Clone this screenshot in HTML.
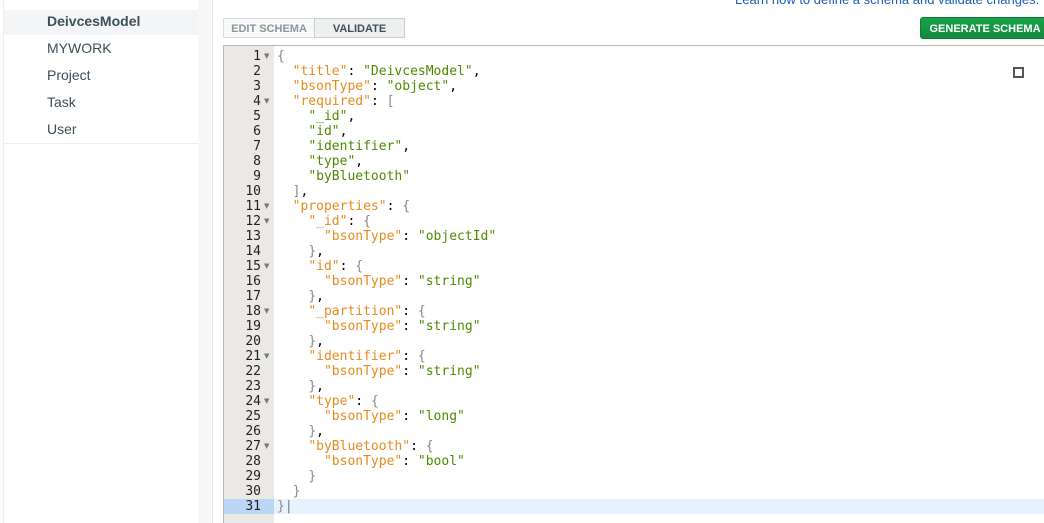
<!DOCTYPE html><html><head><style>
html,body{margin:0;width:1044px;height:523px;overflow:hidden}
body{background:#fff;font-family:"Liberation Sans",sans-serif;position:relative}
.sb{position:absolute;left:3px;top:0;width:194px;height:523px;border-right:1px solid #e4e4e4;border-left:1px solid #eee;background:#fff}
.sb div{position:absolute;left:43px;font-size:14px;color:#3d4f58}
.strip{position:absolute;left:198px;top:0;width:14px;height:523px;background:#f7f7f7;border-right:1px solid #e4e4e4}
.btn{position:absolute;top:18px;height:20px;font-size:11px;font-weight:bold;line-height:20px;text-align:center;box-sizing:border-box}
.ed{position:absolute;left:223px;top:45px;width:830px;height:477px;border:1px solid #b8b8b8;border-bottom:none;background:#fff;overflow:hidden}
.gut{position:absolute;left:0;top:0;width:50px;height:100%;background:#ebe9e6}
pre{margin:0;font-family:"DejaVu Sans Mono",monospace;font-size:13px;line-height:15px;position:absolute;top:3px}
.k{color:#e68a1d}.s{color:#4d8a00}.p{color:#888}
.a{position:absolute;left:40px;color:#777;font-size:7px;font-family:"DejaVu Sans",sans-serif}
</style></head><body>
<div class="sb">
<div style="top:-13px;color:#999">CIDO</div>
<div style="left:0;top:10px;width:194px;height:25px;background:#f4f5f6"></div>
<div style="top:13px;font-weight:bold;color:#3d4f58">DeivcesModel</div>
<div style="top:40px">MYWORK</div>
<div style="top:67px">Project</div>
<div style="top:94px">Task</div>
<div style="top:121px">User</div>
<div style="left:0;top:143px;width:194px;border-top:1px solid #eee"></div>
</div>
<div class="strip"></div>
<div class="btn" style="left:223px;width:92px;border:1px solid #ddd;background:#f7f8f8;color:#8a979c">EDIT SCHEMA</div>
<div class="btn" style="left:314px;width:91px;border:1px solid #ccc;background:#eef0f0;color:#3d4f58">VALIDATE</div>
<div style="position:absolute;left:735px;top:-8px;font-size:13px;color:#1a5fb4;white-space:nowrap">Learn how to define a schema and validate changes.</div>
<div class="btn" style="left:920px;top:17px;width:130px;height:22px;line-height:22px;background:linear-gradient(#1aa34a,#138a3c);color:#fff;border-radius:3px;border:1px solid #0f7a35">GENERATE SCHEMA</div>
<div class="ed">
<div class="gut"></div>
<div style="position:absolute;left:0;top:453px;width:830px;height:15px;background:#e8f2fe"></div>
<div style="position:absolute;left:0;top:453px;width:50px;height:15px;background:#bcd6f5"></div>
<pre style="left:0;width:37px;text-align:right;color:#222">1
2
3
4
5
6
7
8
9
10
11
12
13
14
15
16
17
18
19
20
21
22
23
24
25
26
27
28
29
30
31</pre>
<div class="a" style="top:6px">▼</div>
<div class="a" style="top:51px">▼</div>
<div class="a" style="top:156px">▼</div>
<div class="a" style="top:171px">▼</div>
<div class="a" style="top:216px">▼</div>
<div class="a" style="top:261px">▼</div>
<div class="a" style="top:306px">▼</div>
<div class="a" style="top:351px">▼</div>
<div class="a" style="top:396px">▼</div>
<pre style="left:53px"><span class="p">{</span>
  <span class="k">"title"</span>: <span class="s">"DeivcesModel"</span>,
  <span class="k">"bsonType"</span>: <span class="s">"object"</span>,
  <span class="k">"required"</span>: <span class="p">[</span>
    <span class="s">"_id"</span>,
    <span class="s">"id"</span>,
    <span class="s">"identifier"</span>,
    <span class="s">"type"</span>,
    <span class="s">"byBluetooth"</span>
  <span class="p">]</span>,
  <span class="k">"properties"</span>: <span class="p">{</span>
    <span class="k">"_id"</span>: <span class="p">{</span>
      <span class="k">"bsonType"</span>: <span class="s">"objectId"</span>
    <span class="p">}</span>,
    <span class="k">"id"</span>: <span class="p">{</span>
      <span class="k">"bsonType"</span>: <span class="s">"string"</span>
    <span class="p">}</span>,
    <span class="k">"_partition"</span>: <span class="p">{</span>
      <span class="k">"bsonType"</span>: <span class="s">"string"</span>
    <span class="p">}</span>,
    <span class="k">"identifier"</span>: <span class="p">{</span>
      <span class="k">"bsonType"</span>: <span class="s">"string"</span>
    <span class="p">}</span>,
    <span class="k">"type"</span>: <span class="p">{</span>
      <span class="k">"bsonType"</span>: <span class="s">"long"</span>
    <span class="p">}</span>,
    <span class="k">"byBluetooth"</span>: <span class="p">{</span>
      <span class="k">"bsonType"</span>: <span class="s">"bool"</span>
    <span class="p">}</span>
  <span class="p">}</span>
<span class="p">}</span><span style="color:#777">|</span></pre>
<div style="position:absolute;left:789px;top:21px;width:7px;height:7px;border:2px solid #555"></div>
</div>
</body></html>
